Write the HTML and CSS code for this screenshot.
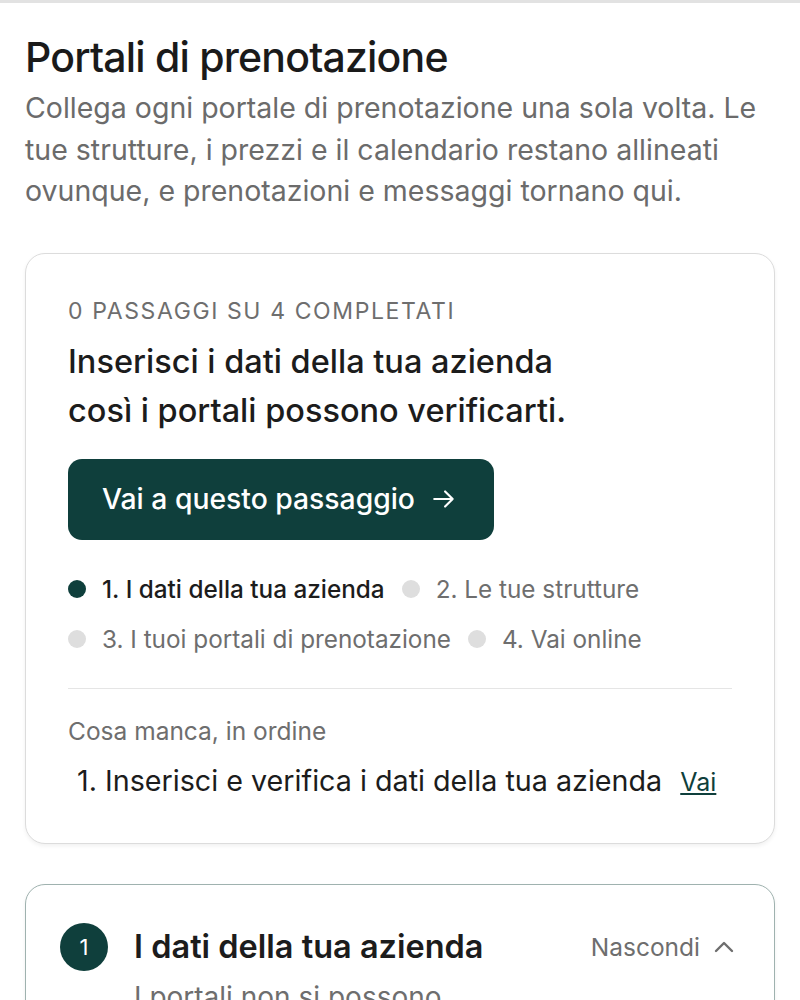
FILE: index.html
```html
<!DOCTYPE html>
<html lang="it">
<head>
    <meta charset="utf-8">
    <title>Portali di prenotazione</title>
    <meta name="viewport" content="width=device-width, initial-scale=1">
    <link rel="stylesheet" href="styles.css">
</head>
<body>
    <div class="topbar"></div>
    <div class="page">
        <h1 class="title">Portali di prenotazione</h1>
        <p class="intro">Collega ogni portale di prenotazione una sola volta. Le tue strutture, i prezzi e il calendario restano allineati ovunque, e prenotazioni e messaggi tornano qui.</p>

        <div class="card progress">
            <div class="eyebrow">0 passaggi su 4 completati</div>
            <h2 class="next">Inserisci i dati della tua azienda<br>così i portali possono verificarti.</h2>
            <a class="btn" href="#">Vai a questo passaggio
                <svg width="26" height="26" viewBox="0 0 24 24" fill="none" stroke="currentColor" stroke-width="2" stroke-linecap="round" stroke-linejoin="round"><path d="M3 12h17M13 5l7 7-7 7"/></svg>
            </a>
            <ul class="steps">
                <li class="step active"><span class="dot"></span>1. I dati della tua azienda</li>
                <li class="step"><span class="dot"></span>2. Le tue strutture</li>
                <li class="step"><span class="dot"></span>3. I tuoi portali di prenotazione</li>
                <li class="step"><span class="dot"></span>4. Vai online</li>
            </ul>
            <div class="missing">
                <div class="missing-label">Cosa manca, in ordine</div>
                <div class="missing-item">1. Inserisci e verifica i dati della tua azienda <a href="#">Vai</a></div>
            </div>
        </div>

        <div class="card section">
            <div class="section-head">
                <span class="num">1</span>
                <h3 class="section-title">I dati della tua azienda</h3>
                <button class="toggle">Nascondi
                    <svg width="24" height="24" viewBox="0 0 24 24" fill="none" stroke="currentColor" stroke-width="2.4" stroke-linecap="round" stroke-linejoin="round"><path d="M4 16l8-8 8 8"/></svg>
                </button>
            </div>
            <p class="section-text">I portali non si possono<br>collegare finché i dati della tua azienda non sono verificati.</p>
        </div>
    </div>
</body>
</html>
```

FILE: styles.css
```css
html {
    font-family: Inter, "Noto Sans", sans-serif;
    color: #1c1c1c;
}

body {
    margin: 0;
    background: #fff;
}

.topbar {
    height: 3px;
    background: #e2e2e2;
}

.page {
    padding: 28px 25px 40px;
}

.title {
    margin: 0;
    font-size: 41px;
    font-weight: 500;
    letter-spacing: -0.8px;
    line-height: 52px;
    color: #1a1a1a;
}

.intro {
    margin: 4px 0 0;
    font-size: 28.5px;
    line-height: 41.5px;
    color: #6b6b6b;
}

.card {
    border: 1.5px solid #dcdcdc;
    border-radius: 20px;
    background: #fff;
    box-shadow: 0 2px 4px rgba(0, 0, 0, .06);
}

.progress {
    margin-top: 41px;
    padding: 43px 42px 43px;
}

.eyebrow {
    font-size: 23px;
    letter-spacing: 1.6px;
    text-transform: uppercase;
    color: #6e6e6e;
    line-height: 28px;
}

.next {
    margin: 12px 0 0;
    font-size: 32.5px;
    font-weight: 500;
    line-height: 49px;
    color: #1c1c1c;
}

.btn {
    margin-top: 24px;
    display: inline-flex;
    align-items: center;
    gap: 16px;
    height: 81px;
    padding: 0 37px 0 34px;
    border-radius: 14px;
    background: #0f3f3c;
    color: #fff;
    font-size: 28.3px;
    font-weight: 500;
    text-decoration: none;
}

.steps {
    list-style: none;
    margin: 34px 0 0;
    padding: 0;
    display: flex;
    flex-wrap: wrap;
    column-gap: 17px;
    row-gap: 20px;
}

.step {
    display: flex;
    align-items: center;
    gap: 16px;
    font-size: 24.3px;
    line-height: 30px;
    color: #6e6e6e;
}

.step.active {
    color: #1c1c1c;
    font-weight: 500;
}

.dot {
    width: 18px;
    height: 18px;
    border-radius: 50%;
    background: #dedede;
}

.step.active .dot {
    background: #0f3f3c;
}

.missing {
    margin-top: 34px;
    border-top: 1.5px solid #e5e5e5;
    padding-top: 27px;
}

.missing-label {
    font-size: 24.5px;
    line-height: 30px;
    color: #6e6e6e;
}

.missing-item {
    margin-top: 17px;
    padding-left: 9px;
    font-size: 28.7px;
    line-height: 36px;
    color: #1c1c1c;
}

.missing-item a {
    margin-left: 10px;
    font-size: 25px;
    color: #0f3f3c;
}

.section {
    margin-top: 40px;
    border-color: #9fb2af;
    padding: 38px 38px 0 34px;
}

.section-head {
    display: flex;
    align-items: center;
    gap: 26px;
}

.num {
    width: 48px;
    height: 48px;
    border-radius: 50%;
    background: #0f3f3c;
    color: #fff;
    font-size: 22px;
    display: flex;
    align-items: center;
    justify-content: center;
    flex-shrink: 0;
}

.section-title {
    margin: 0;
    flex: 1;
    font-size: 32.5px;
    font-weight: 600;
    color: #1c1c1c;
}

.toggle {
    display: flex;
    align-items: center;
    gap: 12px;
    border: none;
    background: none;
    font: inherit;
    font-size: 24.5px;
    color: #6e6e6e;
    padding: 0;
}

.section-text {
    margin: 6px 0 0 74px;
    font-size: 28px;
    line-height: 40px;
    color: #6e6e6e;
}
```
